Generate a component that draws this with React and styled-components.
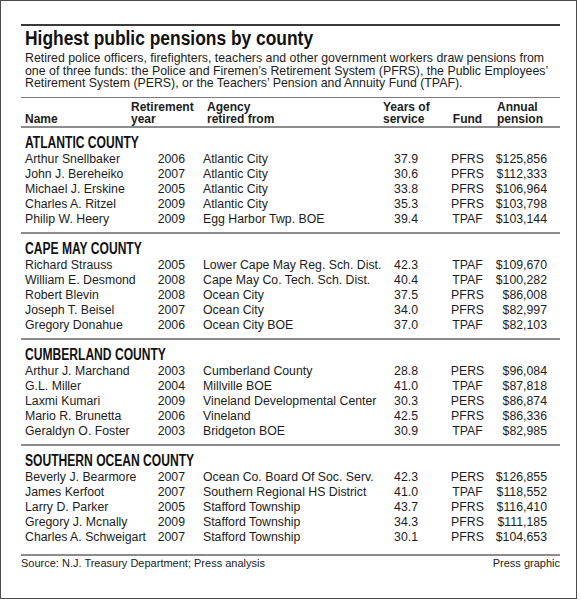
import React from "react";
import styled, { createGlobalStyle } from "styled-components";

const GlobalStyle = createGlobalStyle`
  body {
    margin: 0;
    background: #fff;
  }
`;

const sections = [
  {
    county: "ATLANTIC COUNTY",
    rows: [
      ["Arthur Snellbaker", "2006", "Atlantic City", "37.9", "PFRS", "$125,856"],
      ["John J. Bereheiko", "2007", "Atlantic City", "30.6", "PFRS", "$112,333"],
      ["Michael J. Erskine", "2005", "Atlantic City", "33.8", "PFRS", "$106,964"],
      ["Charles A. Ritzel", "2009", "Atlantic City", "35.3", "PFRS", "$103,798"],
      ["Philip W. Heery", "2009", "Egg Harbor Twp. BOE", "39.4", "TPAF", "$103,144"]
    ]
  },
  {
    county: "CAPE MAY COUNTY",
    rows: [
      ["Richard Strauss", "2005", "Lower Cape May Reg. Sch. Dist.", "42.3", "TPAF", "$109,670"],
      ["William E. Desmond", "2008", "Cape May Co. Tech. Sch. Dist.", "40.4", "TPAF", "$100,282"],
      ["Robert Blevin", "2008", "Ocean City", "37.5", "PFRS", "$86,008"],
      ["Joseph T. Beisel", "2007", "Ocean City", "34.0", "PFRS", "$82,997"],
      ["Gregory Donahue", "2006", "Ocean City BOE", "37.0", "TPAF", "$82,103"]
    ]
  },
  {
    county: "CUMBERLAND COUNTY",
    rows: [
      ["Arthur J. Marchand", "2003", "Cumberland County", "28.8", "PERS", "$96,084"],
      ["G.L. Miller", "2004", "Millville BOE", "41.0", "TPAF", "$87,818"],
      ["Laxmi Kumari", "2009", "Vineland Developmental Center", "30.3", "PERS", "$86,874"],
      ["Mario R. Brunetta", "2006", "Vineland", "42.5", "PFRS", "$86,336"],
      ["Geraldyn O. Foster", "2003", "Bridgeton BOE", "30.9", "TPAF", "$82,985"]
    ]
  },
  {
    county: "SOUTHERN OCEAN COUNTY",
    rows: [
      ["Beverly J. Bearmore", "2007", "Ocean Co. Board Of Soc. Serv.", "42.3", "PERS", "$126,855"],
      ["James Kerfoot", "2007", "Southern Regional HS District", "41.0", "TPAF", "$118,552"],
      ["Larry D. Parker", "2005", "Stafford Township", "43.7", "PFRS", "$116,410"],
      ["Gregory J. Mcnally", "2009", "Stafford Township", "34.3", "PFRS", "$111,185"],
      ["Charles A. Schweigart", "2007", "Stafford Township", "30.1", "PFRS", "$104,653"]
    ]
  }
];

const Frame = styled.div`
  width: 577px;
  height: 599px;
  box-sizing: border-box;
  border: 1px solid #4d4d4d;
  padding: 23px 16px 0 20px;
  font-family: "Liberation Sans", Arial, sans-serif;
  color: #1c1c1c;
`;

const TopRule = styled.div`
  border-top: 2px solid #3a3a3a;
`;

// the print face is a condensed gothic; squeeze the bold sans to match
const Condensed = styled.span`
  display: inline-block;
  white-space: nowrap;
  transform: scaleX(${(p) => p.$squeeze});
  transform-origin: left center;
`;

const Title = styled.h1`
  margin: 1px 0 0 4px;
  font-weight: bold;
  font-size: 20px;
  line-height: 22px;
  color: #111;
`;

const Intro = styled.p`
  margin: 3px 0 7px 4px;
  font-size: 12.35px;
  line-height: 12.5px;
`;

const ThinRule = styled.div`
  border-top: 1px solid #7a7a7a;
`;

const Grid = styled.div`
  display: grid;
  grid-template-columns: 106px 72px 180px 62px 45px 1fr;
  padding: 0 4px;
`;

const HeadRow = styled(Grid)`
  align-items: end;
  padding-top: 3px;
  margin-bottom: 1.5px;
  font-weight: bold;
  font-size: 12px;
  line-height: 12px;
`;

const Row = styled(Grid)`
  font-size: 12.3px;
  line-height: 15px;
  height: 15px;
  white-space: nowrap;
`;

const Cell = styled.span`
  text-align: ${(p) => p.$align || "left"};
  padding-left: ${(p) => p.$left || 0}px;
  padding-right: ${(p) => p.$right || 0}px;
`;

const Section = styled.section`
  border-top: 2px solid #8c8c8c;
  padding: 6px 0 5px;
`;

const County = styled.h2`
  margin: 0 0 1px 4px;
  font-weight: bold;
  font-size: 16px;
  line-height: 17px;
  color: #111;
`;

const Footer = styled.div`
  display: flex;
  justify-content: space-between;
  margin-top: 4px;
  border-top: 2px solid #8c8c8c;
  font-size: 11px;
  line-height: 14px;
`;

const App = () => (
  <>
    <GlobalStyle />
    <Frame>
      <TopRule />
      <Title>
        <Condensed $squeeze={0.87}>Highest public pensions by county</Condensed>
      </Title>
      <Intro>
        Retired police officers, firefighters, teachers and other government workers draw pensions from
        one of three funds: the Police and Firemen’s Retirement System (PFRS), the Public Employees’
        Retirement System (PERS), or the Teachers’ Pension and Annuity Fund (TPAF).
      </Intro>
      <ThinRule />
      <HeadRow>
        <Cell>Name</Cell>
        <Cell>
          Retirement
          <br />
          year
        </Cell>
        <Cell $left={4}>
          Agency
          <br />
          retired from
        </Cell>
        <Cell>
          Years of
          <br />
          service
        </Cell>
        <Cell $align="center">Fund</Cell>
        <Cell $left={7}>
          Annual
          <br />
          pension
        </Cell>
      </HeadRow>
      {sections.map((section) => (
        <Section key={section.county}>
          <County>
            <Condensed $squeeze={0.755}>{section.county}</Condensed>
          </County>
          {section.rows.map(([name, year, agency, years, fund, pension]) => (
            <Row key={name}>
              <Cell>{name}</Cell>
              <Cell $align="right" $right={18}>
                {year}
              </Cell>
              <Cell>{agency}</Cell>
              <Cell $align="right" $right={27}>
                {years}
              </Cell>
              <Cell $align="center">{fund}</Cell>
              <Cell $align="right" $right={9}>
                {pension}
              </Cell>
            </Row>
          ))}
        </Section>
      ))}
      <Footer>
        <span>Source: N.J. Treasury Department; Press analysis</span>
        <span>Press graphic</span>
      </Footer>
    </Frame>
  </>
);

export default App;
